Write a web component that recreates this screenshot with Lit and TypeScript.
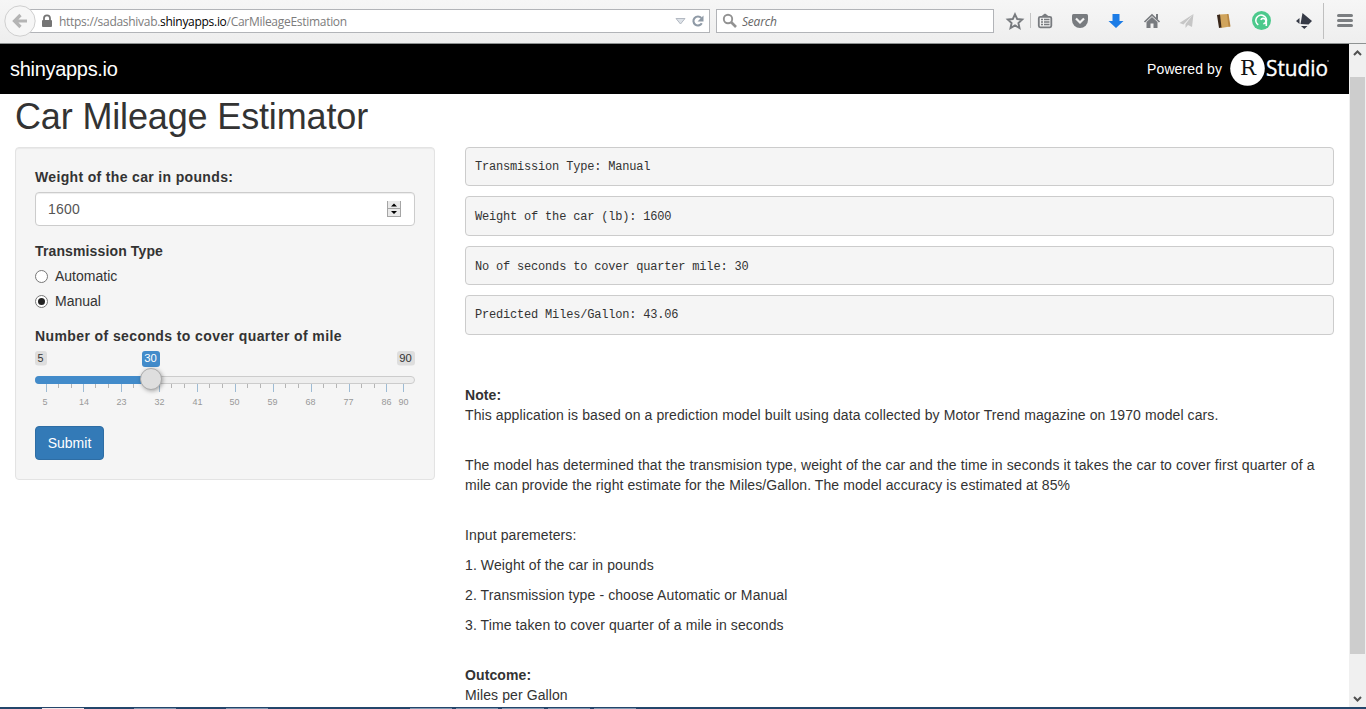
import { LitElement, html, css, svg } from "lit";
import { customElement } from "lit/decorators.js";

@customElement("browser-bar")
class BrowserBar extends LitElement {
  static styles = css`
    :host { display: flex; box-sizing: border-box; height: 44px; align-items: flex-start; background: linear-gradient(#f6f6f6, #eeeeee); border-bottom: 1px solid #8e9292; font-family: "Open Sans", "Noto Sans", sans-serif; font-size: 12px; }
    .back { width: 36px; height: 42px; flex: none; z-index: 1; }
    .url { box-sizing: border-box; display: flex; align-items: center; width: 684px; height: 24px; margin: 9px 0 0 -10px; padding: 0 5px 0 14px; border: 1px solid #b2b4b8; background: #fff; color: #7c7c7c; }
    .address { flex: 1; margin-left: 6px; padding-top: 2px; letter-spacing: -0.29px; white-space: nowrap; }
    .address b { font-weight: 400; color: #000; }
    .search { box-sizing: border-box; display: flex; align-items: center; width: 278px; height: 24px; margin: 9px 0 0 6px; padding-left: 5px; border: 1px solid #b2b4b8; background: #fff; color: #666; font-style: italic; }
    .search span { margin-left: 4px; padding-top: 2px; letter-spacing: -0.2px; }
    .tools { flex: none; width: 372px; height: 43px; }
  `;
  render() {
    return html`
      <svg class="back" viewBox="0 0 36 42"><circle cx="20" cy="21" r="15.2" fill="#f6f6f6" stroke="#cfcfcf"/><path d="M27 21H16M20.500 15l-6 6 6 6" fill="none" stroke="#b4b4b4" stroke-width="3.200"/></svg>
      <div class="url">
        <svg width="12" height="14" viewBox="0 0 12 14"><path d="M3 6V4.300a3 3 0 0 1 6 0V6" fill="none" stroke="#757575" stroke-width="1.800"/><rect x="1" y="6" width="10" height="7" rx="1" fill="#757575"/></svg>
        <span class="address">https://sadashivab.<b>shinyapps.io</b>/CarMileageEstimation</span>
        <svg width="30" height="16" viewBox="0 0 30 16"><path d="M2 5.500h9L6.500 11z" fill="#dde2e8" stroke="#b3b9c2"/><path d="M27.800 10.300a4.500 4.500 0 1 1-.5-5.300" fill="none" stroke="#8f9aa6" stroke-width="2.100"/><path d="M29.500 2.500v6h-6z" fill="#8f9aa6"/></svg>
      </div>
      <div class="search">
        <svg width="16" height="16" viewBox="0 0 16 16"><circle cx="6" cy="6" r="4.200" fill="none" stroke="#929292" stroke-width="1.900"/><path d="M9 9l5 5" stroke="#929292" stroke-width="2.600"/></svg>
        <span>Search</span>
      </div>
      <svg class="tools" viewBox="994 0 372 43">
        <path d="M1015 14.300l2.200 4.700 5 .5-3.800 3.500 1.100 5-4.500-2.600-4.500 2.600 1.100-5-3.800-3.500 5-.5z" fill="none" stroke="#787b7f" stroke-width="1.900"/>
        <path d="M1030.500 13v15" stroke="#c4c4c4"/>
        <rect x="1038.800" y="16.800" width="12.500" height="10.500" rx="1.500" fill="none" stroke="#787b7f" stroke-width="1.800"/><path d="M1041 16.500l3.500-2.800h1l3.500 2.800z" fill="#787b7f"/><path d="M1041 19.500h2m1 0h5.500M1041 22h2m1 0h5.500M1041 24.500h2m1 0h5.500" stroke="#787b7f" stroke-width="1.400"/>
        <path d="M1073.500 14h13q1.500 0 1.500 1.500V20a8 8 0 0 1-16 0v-4.500q0-1.500 1.500-1.500z" fill="#787b7f"/><path d="M1076 18.500l4 4 4-4" fill="none" stroke="#f3f3f3" stroke-width="2.200"/>
        <path d="M1112.500 14h7v7h4l-7.500 7-7.500-7h4z" fill="#1c7ce6"/>
        <path d="M1144.500 22l7.500-7 7.500 7" fill="none" stroke="#787b7f" stroke-width="1.700"/><path d="M1156 14h2v5h-2zM1146.500 22l5.500-5 5.500 5v6h-4v-4.500h-3v4.500h-4z" fill="#787b7f"/>
        <path d="M1193.500 14l-14 9 4 1.500zM1193.500 14l-8 10v4l2.500-3 4 2z" fill="#c6c6c6"/>
        <path d="M1219 14.500l9-.5 2 12.500-9 1.500z" fill="#d0a45c"/><path d="M1217 15l3-.5 1.500 13-2.500.5z" fill="#39271a"/><path d="M1227 14l1.500.0 2 12.500-2 .3z" fill="#b78642"/>
        <circle cx="1261.500" cy="20.500" r="9.500" fill="#4cc98c"/><path d="M1258.300 24.800a5.300 5.300 0 1 1 8-3v4.200M1263.300 23.800a2.700 2.700 0 1 0-2.500-4" fill="none" stroke="#fff" stroke-width="1.600"/>
        <path d="M1302.500 13l9.500 8-3.500 3.500-8-.5z" fill="#363a46"/><path d="M1299.500 18v6l-3.500-3zM1301 26h6.500l-3.200 3z" fill="#363a46"/>
        <path d="M1323.500 3v36" stroke="#bfbfbf"/>
        <path d="M1338.500 15.500h13M1338.500 20.500h13M1338.500 25.500h13" stroke="#7b7e81" stroke-width="3" stroke-linecap="round"/>
      </svg>`;
  }
}

@customElement("seconds-slider")
class SecondsSlider extends LitElement {
  static styles = css`
    :host { display: block; height: 60px; }
    svg { display: block; font-family: "Liberation Sans", Arial, sans-serif; font-size: 9px; overflow: visible; }
    .cap { font-size: 10px; fill: #333; text-anchor: middle; }
    .value { fill: #fff; }
    .tick { fill: #999; text-anchor: middle; }
    .handle { filter: drop-shadow(1px 1px 2px rgba(0,0,0,.35)); }
  `;
  render() {
    const labels: [number, string, number][] = [[11.5, "5", 10], [48.5, "14", 49], [86.5, "23", 86.5], [124.5, "32", 124.5], [162.5, "41", 162.5], [200.5, "50", 199.5], [238.5, "59", 237.5], [276.5, "68", 275.5], [314.5, "77", 313.5], [351.5, "86", 351.5], [368.5, "90", 368.5]];
    const minor = labels.slice(0, 9).flatMap(([x]) => [x + 12, x + 25]);
    return html`<svg width="380" height="60" viewBox="0 0 380 60">
      <rect x="0" y="1" width="12" height="14.500" rx="3" fill="#dedede"/><text class="cap" x="5.500" y="12" textLength="6" lengthAdjust="spacingAndGlyphs">5</text>
      <rect x="362" y="1" width="18" height="14.500" rx="3" fill="#dedede"/><text class="cap" x="370.500" y="12" textLength="12.500" lengthAdjust="spacingAndGlyphs">90</text>
      <rect x="107" y="1" width="18" height="16" rx="3" fill="#428bca"/><text class="cap value" x="115.500" y="12" textLength="12.500" lengthAdjust="spacingAndGlyphs">30</text>
      <rect x=".5" y="26.500" width="379" height="7" rx="3.500" fill="#eee" stroke="#ccc"/>
      <path d="M4 26H116V34H4a4 4 0 0 1 0-8z" fill="#428bca"/>
      ${minor.map((x) => svg`<path d="M${x} 34v4" stroke="#b5b5b5"/>`)}
      ${labels.map(([x, t, c]) => svg`<path d="M${x} 34v8" stroke="#9dbbd4"/><text class="tick" x=${c} y="54.500">${t}</text>`)}
      <circle class="handle" cx="116" cy="29" r="10.500" fill="#dedede" stroke="#aaa"/>
    </svg>`;
  }
}

@customElement("app-root")
class AppRoot extends LitElement {
  static styles = css`
    :host { display: flex; flex-direction: column; width: 1366px; height: 709px; overflow: hidden; background: #fff; color: #333; font: 14px/20px "Liberation Sans", Arial, sans-serif; }
    * { box-sizing: border-box; }
    .view { display: flex; height: 663px; overflow: hidden; }
    .page { width: 1349px; flex: none; }
    .banner { display: flex; align-items: center; height: 50px; padding: 0 18px 0 10px; background: #000; color: #fff; }
    .brand { flex: 1; font-size: 20px; letter-spacing: -0.3px; }
    .powered { margin-right: 8px; letter-spacing: 0.1px; }
    h1 { margin: 3px 15px 10px; font-size: 36px; font-weight: 400; line-height: 40px; letter-spacing: -0.15px; }
    .columns { display: grid; grid-template-columns: 420px 869px; gap: 30px; padding-left: 15px; align-items: start; }
    .panel { height: 333px; padding: 19px; border: 1px solid #e3e3e3; border-radius: 4px; background: #f5f5f5; box-shadow: inset 0 1px 1px rgba(0,0,0,.05); }
    .label { font-weight: 700; letter-spacing: 0.34px; }
    .type-label { letter-spacing: 0.13px; }
    .field { display: flex; align-items: center; justify-content: space-between; height: 34px; margin: 5px 0 15px; padding: 0 12px; border: 1px solid #ccc; border-radius: 4px; background: #fff; box-shadow: inset 0 1px 1px rgba(0,0,0,.075); color: #555; letter-spacing: 0.2px; }
    .radio { display: flex; align-items: center; gap: 7px; height: 20px; margin-top: 5px; }
    .slider-label { margin-top: 15px; margin-bottom: 4px; letter-spacing: 0.4px; }
    .submit { display: block; height: 34px; width: 69px; margin-top: 16px; padding: 0; border: 1px solid #2e6da4; border-radius: 4px; background: #337ab7; color: #fff; font: inherit; }
    .results { display: grid; grid-template-rows: 39px 40px 39px 40px; row-gap: 10px; padding-bottom: 1px; }
    pre { margin: 0; padding: 10px 9px 7px; border: 1px solid #ccc; border-radius: 4px; background: #f5f5f5; font: 12px/19px "Liberation Mono", monospace; letter-spacing: -0.19px; }
    pre.low { padding-top: 11px; padding-bottom: 6px; }
    .notes { padding-top: 49px; letter-spacing: 0.1px; }
    .notes p { margin: 0 0 10px; white-space: nowrap; }
    .notes .wide { margin-bottom: 30px; }
    .accuracy { letter-spacing: 0.08px; }
    .scroll { width: 17px; flex: none; display: flex; flex-direction: column; align-items: center; background: #f0f0f0; }
    .thumb { width: 15px; height: 577px; margin-top: 16px; background: #cdcdcd; }
    .down { margin-top: 36px; }
    .taskbar { display: block; flex: none; }
  `;
  render() {
    const segs = [134, 226, 410, 456, 502, 548, 594];
    return html`
      <browser-bar></browser-bar>
      <div class="view">
        <main class="page">
          <header class="banner">
            <span class="brand">shinyapps.io</span><span class="powered">Powered by</span>
            <svg width="101" height="40" viewBox="0 0 101 40"><circle cx="17.500" cy="19.500" r="17.300" fill="#fff"/><text x="10" y="26" font-family="DejaVu Serif, serif" font-size="20" fill="#111" textLength="16" lengthAdjust="spacingAndGlyphs">R</text><text x="36" y="27" font-family="Open Sans, sans-serif" font-size="21" fill="#fff" stroke="#fff" stroke-width=".35" textLength="62" lengthAdjust="spacingAndGlyphs">Studio</text><circle cx="98" cy="12" r=".9" fill="#777"/></svg>
          </header>
          <h1>Car Mileage Estimator</h1>
          <div class="columns">
            <section class="panel">
              <div class="label">Weight of the car in pounds:</div>
              <div class="field"><span>1600</span>
                <svg width="16" height="18" viewBox="0 0 16 18"><rect x="1" y="1" width="14" height="16" fill="#e9e9e9"/><path d="M1.500 1v16M1 8.500h14M1 16.500h14M14.500 1v16" stroke="#a5a5a5"/><path d="M5 6.500l3-3 3 3zM5 11h6l-3 3z" fill="#000"/></svg>
              </div>
              <div class="label type-label">Transmission Type</div>
              <div class="radio"><svg width="13" height="13"><circle cx="6.500" cy="6.500" r="6" fill="#fff" stroke="#777"/></svg>Automatic</div>
              <div class="radio"><svg width="13" height="13"><circle cx="6.500" cy="6.500" r="6" fill="#fff" stroke="#777"/><circle cx="6.500" cy="6.500" r="3.500" fill="#222"/></svg>Manual</div>
              <div class="label slider-label">Number of seconds to cover quarter of mile</div>
              <seconds-slider></seconds-slider>
              <button class="submit">Submit</button>
            </section>
            <section>
              <div class="results">
                <pre>Transmission Type: Manual</pre>
                <pre class="low">Weight of the car (lb): 1600</pre>
                <pre class="low">No of seconds to cover quarter mile: 30</pre>
                <pre>Predicted Miles/Gallon: 43.06</pre>
              </div>
              <div class="notes">
                <p class="wide"><b>Note:</b><br>This application is based on a prediction model built using data collected by Motor Trend magazine on 1970 model cars.</p>
                <p class="wide">The model has determined that the transmision type, weight of the car and the time in seconds it takes the car to cover first quarter of a<br><span class="accuracy">mile can provide the right estimate for the Miles/Gallon. The model accuracy is estimated at 85%</span></p>
                <p>Input paremeters:</p>
                <p>1. Weight of the car in pounds</p>
                <p>2. Transmission type - choose Automatic or Manual</p>
                <p class="wide">3. Time taken to cover quarter of a mile in seconds</p>
                <p><b>Outcome:</b><br>Miles per Gallon</p>
              </div>
            </section>
          </div>
        </main>
        <div class="scroll">
          <svg width="17" height="17"><path d="M5 11l3.500-3.500L12 11" fill="none" stroke="#505050" stroke-width="2"/></svg>
          <div class="thumb"></div>
          <svg class="down" width="17" height="17"><path d="M5 7l3.500 3.500L12 7" fill="none" stroke="#505050" stroke-width="2"/></svg>
        </div>
      </div>
      <svg class="taskbar" width="1366" height="2"><rect width="1366" height="2" fill="#24466b"/><rect x="42" y="1" width="42" height="1" fill="#f3e6e8"/>${segs.map((x) => svg`<rect x=${x} y="1" width="42" height="1" fill="#7f97b0"/>`)}</svg>`;
  }
}
